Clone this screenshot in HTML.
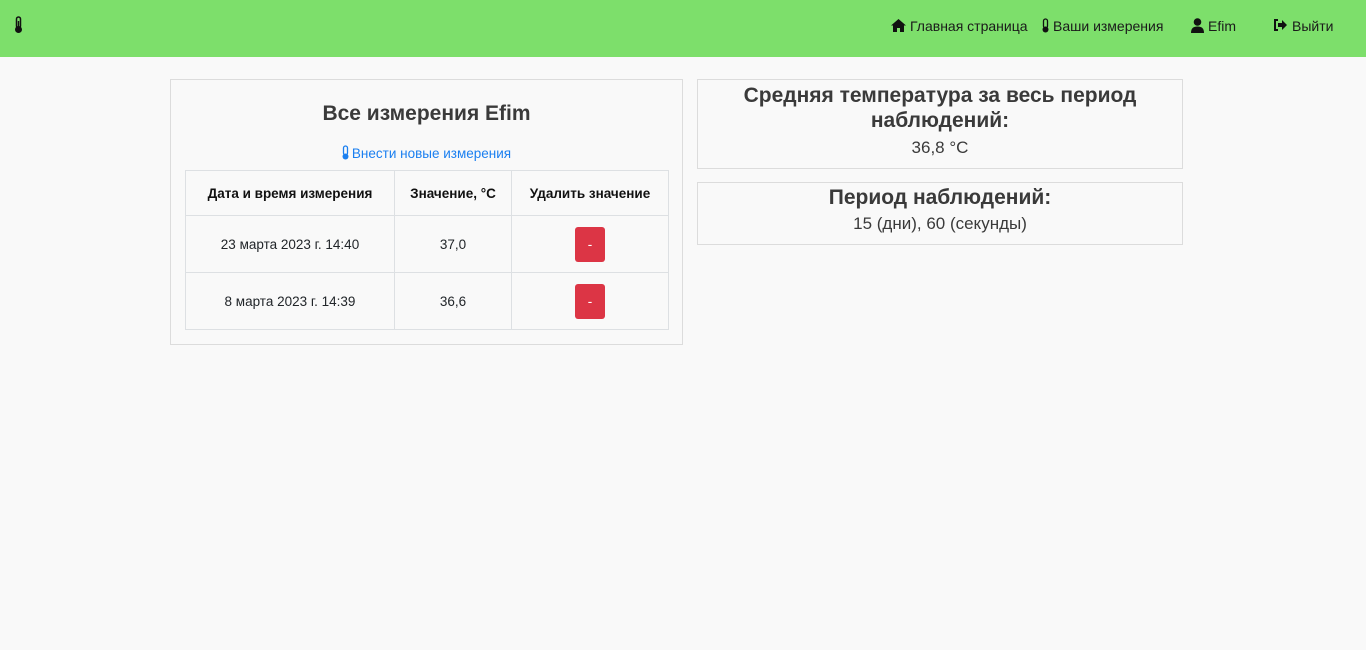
<!DOCTYPE html>
<html><head><meta charset="utf-8"><style>
*{box-sizing:border-box;margin:0;padding:0}
body{width:1366px;height:650px;background:#f9f9f9;font-family:"Liberation Sans",sans-serif;color:#212529;position:relative;overflow:hidden}
.nav{position:absolute;left:0;top:0;width:1366px;height:57px;background:#7ddf6b}
.nav span{position:absolute;top:18px;font-size:14px;color:#1a1a1a}
.card{position:absolute;border:1px solid #dcdcdc;background:#f9f9f9}
h2{font-size:21px;font-weight:bold;color:#3a3a3a;text-align:center}
table{position:absolute;left:14px;top:90px;width:484px;border-collapse:collapse;font-size:13.5px}
td,th{border:1px solid #dde0e3;text-align:center}
th{height:45px;color:#111;font-weight:bold}
td{height:57px}
.btn{display:inline-block;width:30px;height:35px;background:#dc3545;border-radius:3px;color:#fff;line-height:35px}
</style></head><body>
<div class="nav">
<svg style="position:absolute;left:14px;top:16px" width="9" height="18" viewBox="0 0 9 18"><rect x="2.5" y="1" width="4" height="11" rx="2" fill="none" stroke="#111" stroke-width="1.5"/><circle cx="4.5" cy="13.5" r="3.5" fill="#111"/><rect x="3.8" y="5" width="1.4" height="8" fill="#111"/></svg>
<svg style="position:absolute;left:891px;top:19px" width="15" height="13" viewBox="0 0 15 13"><path d="M7.5 0L0 6.5h2V13h4V9h3v4h4V6.5h2z" fill="#111"/></svg>
<span style="left:910px">Главная страница</span>
<svg style="position:absolute;left:1042px;top:18px" width="7" height="15" viewBox="0 0 7 15"><rect x="1.5" y="1" width="4" height="9" rx="2" fill="none" stroke="#111" stroke-width="1.3"/><circle cx="3.5" cy="11.5" r="3" fill="#111"/></svg>
<span style="left:1053px">Ваши измерения</span>
<svg style="position:absolute;left:1191px;top:18px" width="13" height="15" viewBox="0 0 13 15"><circle cx="6.5" cy="4" r="3.8" fill="#111"/><path d="M0 15c0-5 2.5-6.5 6.5-6.5S13 10 13 15z" fill="#111"/></svg>
<span style="left:1208px">Efim</span>
<svg style="position:absolute;left:1273px;top:19px" width="14" height="12" viewBox="0 0 14 12"><path d="M5 1H2v10h3" fill="none" stroke="#111" stroke-width="2"/><path d="M5 4h4V1l5 5-5 5V8H5z" fill="#111"/></svg>
<span style="left:1292px">Выйти</span>
</div>
<div class="card" style="left:170px;top:79px;width:513px;height:266px">
<h2 style="margin-top:22px">Все измерения Efim</h2>
<div style="position:absolute;top:65px;width:100%;text-align:center;font-size:13.5px;color:#1a7ff0"><svg width="7" height="15" viewBox="0 0 7 15" style="vertical-align:-2px"><rect x="1.5" y="1" width="4" height="9" rx="2" fill="none" stroke="#1a7ff0" stroke-width="1.3"/><circle cx="3.5" cy="11.5" r="3" fill="#1a7ff0"/></svg><span style="margin-left:3px">Внести новые измерения</span></div>
<table>
<tr><th style="width:209px">Дата и время измерения</th><th style="width:117px">Значение, °С</th><th>Удалить значение</th></tr>
<tr><td>23 марта 2023 г. 14:40</td><td>37,0</td><td><span class="btn">-</span></td></tr>
<tr><td>8 марта 2023 г. 14:39</td><td>36,6</td><td><span class="btn">-</span></td></tr>
</table>
</div>
<div class="card" style="left:697px;top:79px;width:486px;height:90px">
<h2 style="margin-top:3px;line-height:25px">Средняя температура за весь период наблюдений:</h2>
<div style="text-align:center;font-size:17px;color:#3a3a3a;margin-top:5px">36,8 °С</div>
</div>
<div class="card" style="left:697px;top:182px;width:486px;height:63px">
<h2 style="margin-top:2px;line-height:26px">Период наблюдений:</h2>
<div style="text-align:center;font-size:17px;color:#3a3a3a;margin-top:3px">15 (дни), 60 (секунды)</div>
</div>
</body></html>
